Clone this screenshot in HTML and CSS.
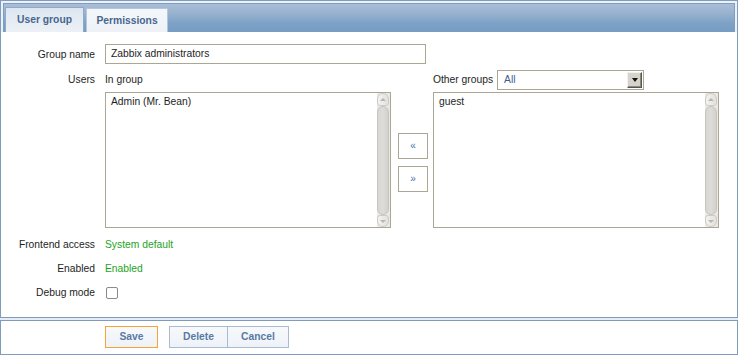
FILE: index.html
```html
<!DOCTYPE html>
<html>
<head>
<meta charset="utf-8">
<link rel="stylesheet" href="styles.css">
</head>
<body>
<div class="panel">
  <div class="tabbar">
    <div class="tabs">
      <div class="tab tab-active">User group</div>
      <div class="tab tab-perm">Permissions</div>
    </div>
  </div>
  <div class="form">
    <div class="lbl">Group name</div>
    <div class="val"><div class="input">Zabbix administrators</div></div>

    <div class="lbl lbl-top row-users">Users</div>
    <div class="val users row-users">
      <div class="col">
        <div class="colhead">In group</div>
        <div class="list">
          <div class="items"><div class="item">Admin (Mr. Bean)</div></div>
          <div class="scroll">
            <div class="sb-up"><span class="tri-up"></span></div>
            <div class="sb-thumb"></div>
            <div class="sb-down"><span class="tri-down"></span></div>
          </div>
        </div>
      </div>
      <div class="moves">
        <div class="move">«</div>
        <div class="move">»</div>
      </div>
      <div class="col">
        <div class="colhead">Other groups
          <div class="select"><span class="sel-text">All</span><span class="sel-btn"><span class="sel-tri"></span></span></div>
        </div>
        <div class="list">
          <div class="items"><div class="item">guest</div></div>
          <div class="scroll">
            <div class="sb-up"><span class="tri-up"></span></div>
            <div class="sb-thumb"></div>
            <div class="sb-down"><span class="tri-down"></span></div>
          </div>
        </div>
      </div>
    </div>

    <div class="lbl row-first">Frontend access</div>
    <div class="val green row-first">System default</div>

    <div class="lbl row">Enabled</div>
    <div class="val green row">Enabled</div>

    <div class="lbl row">Debug mode</div>
    <div class="val row"><span class="checkbox"></span></div>
  </div>
</div>
<div class="gap"></div>
<div class="footer">
  <div class="btn btn-save">Save</div>
  <div class="btn-group">
    <div class="btn btn-left">Delete</div>
    <div class="btn btn-right">Cancel</div>
  </div>
</div>
</body>
</html>
```

FILE: styles.css
```css
* { box-sizing: border-box; }
html, body { margin: 0; padding: 0; background: #ffffff; }
body {
  width: 738px;
  height: 355px;
  font-family: "Liberation Sans", Arial, sans-serif;
  font-size: 10.3px;
  color: #1e1e1e;
  overflow: hidden;
}
.panel {
  border: 1px solid #7f9cc0;
  background: #ffffff;
}
.tabbar {
  padding: 2px 2px 0 2px;
  background: #eef2f7;
}
.tabs {
  height: 29px;
  border: 1px solid #7e9dc3;
  border-bottom: none;
  background: linear-gradient(to bottom, #a9bed7 0%, #9ab3d0 30%, #7da1c6 70%, #779dc4 100%);
  padding: 3px 0 0 1px;
  display: flex;
  align-items: flex-end;
  gap: 2px;
}
.tab {
  height: 25px;
  line-height: 24px;
  font-weight: bold;
  color: #47668f;
  text-align: center;
  border: 1px solid #8fa9c8;
  border-bottom: none;
}
.tab-active {
  width: 79px;
  background: linear-gradient(to bottom, #dde6f0, #edf1f6);
}
.tab-perm {
  width: 82px;
  height: 24px;
  background: linear-gradient(to bottom, #f4f7fa, #eef2f7);
  border-color: #b5c6da;
}
.form {
  display: grid;
  grid-template-columns: 94px 1fr;
  column-gap: 10px;
  padding: 12px 0 12px 0;
  align-items: center;
}
.lbl {
  text-align: right;
  white-space: nowrap;
}
.lbl-top { align-self: start; line-height: 20px; }
.row-users { margin-top: 6px; }
.row-first { margin-top: 5px; height: 24px; line-height: 24px; }
.row { height: 24px; line-height: 24px; }
.val { display: flex; align-items: center; }
.green { color: #1ea31e; }
.input {
  width: 321px;
  height: 20px;
  border: 1px solid #aaa795;
  padding-left: 5px;
  line-height: 18px;
  background: #fff;
}
.users { align-items: flex-start; }
.col { width: 286px; display: flex; flex-direction: column; }
.colhead {
  height: 20px;
  line-height: 20px;
  margin-bottom: 2px;
  display: flex;
  align-items: center;
  gap: 4px;
}
.list {
  height: 136px;
  border: 1px solid #aaa795;
  display: flex;
  background: #fff;
}
.items { flex: 1; padding: 1px 5px; }
.item { line-height: 15px; }
.scroll {
  width: 13px;
  background: #ebe9e5;
  display: flex;
  flex-direction: column;
  padding: 0 1px 0 0;
}
.sb-up, .sb-down {
  height: 13px;
  background: linear-gradient(to right, #f4f3f1, #e3e1dd);
  border: 1px solid #cdcbc6;
  display: flex;
  align-items: center;
  justify-content: center;
}
.sb-up { border-radius: 6px 6px 3px 3px; }
.sb-down { border-radius: 3px 3px 6px 6px; height: 12px; }
.sb-thumb {
  flex: 1;
  background: linear-gradient(to right, #d9d7d3, #dedcd8 50%, #d3d1cc);
  border: 1px solid #c6c4bf;
  border-radius: 6px;
}
.tri-up {
  width: 0; height: 0;
  border-left: 3px solid transparent;
  border-right: 3px solid transparent;
  border-bottom: 3px solid #b8b6b2;
}
.tri-down {
  width: 0; height: 0;
  border-left: 3px solid transparent;
  border-right: 3px solid transparent;
  border-top: 3px solid #b8b6b2;
}
.moves {
  width: 30px;
  margin: 63px 5px 0 7px;
  display: flex;
  flex-direction: column;
  gap: 7px;
}
.move {
  width: 30px;
  height: 26px;
  border: 1px solid #aaa795;
  background: #fff;
  text-align: center;
  line-height: 23px;
  font-size: 10px;
  color: #4a6fa5;
}
.select {
  width: 147px;
  height: 20px;
  border: 1px solid #aaa795;
  display: flex;
  align-items: center;
  justify-content: space-between;
  padding: 0 1px 0 6px;
  background: #fff;
}
.sel-text { color: #3a5e94; }
.sel-btn {
  width: 15px;
  height: 16px;
  background: #d6d3cc;
  border-top: 1px solid #f2f1ee;
  border-left: 1px solid #f2f1ee;
  border-right: 1px solid #555;
  border-bottom: 1px solid #555;
  box-shadow: inset -1px -1px 0 #8d8a84;
  display: flex;
  align-items: center;
  justify-content: center;
}
.sel-tri {
  width: 0; height: 0;
  border-left: 3px solid transparent;
  border-right: 3px solid transparent;
  border-top: 4px solid #111;
}
.checkbox {
  width: 12px;
  height: 12px;
  border: 1px solid #8a8a8a;
  border-radius: 2px;
  background: #fff;
  margin-left: 1px;
}
.gap { height: 2px; background: #e6ecf4; }
.footer {
  height: 35px;
  border: 1px solid #7f9cc0;
  display: flex;
  align-items: flex-start;
  padding: 5px 0 0 104px;
  gap: 11px;
  background: #fff;
}
.btn {
  height: 22px;
  line-height: 20px;
  font-weight: bold;
  color: #5a7aa3;
  text-align: center;
  background: linear-gradient(to bottom, #f7f9fb, #eef2f7);
  border: 1px solid #a7bbd3;
}
.btn-save { width: 53px; border-color: #f5a43a; }
.btn-group { display: flex; }
.btn-left { width: 59px; }
.btn-right { width: 62px; border-left: none; border-left: 1px solid #a7bbd3; margin-left: -1px; }
```
